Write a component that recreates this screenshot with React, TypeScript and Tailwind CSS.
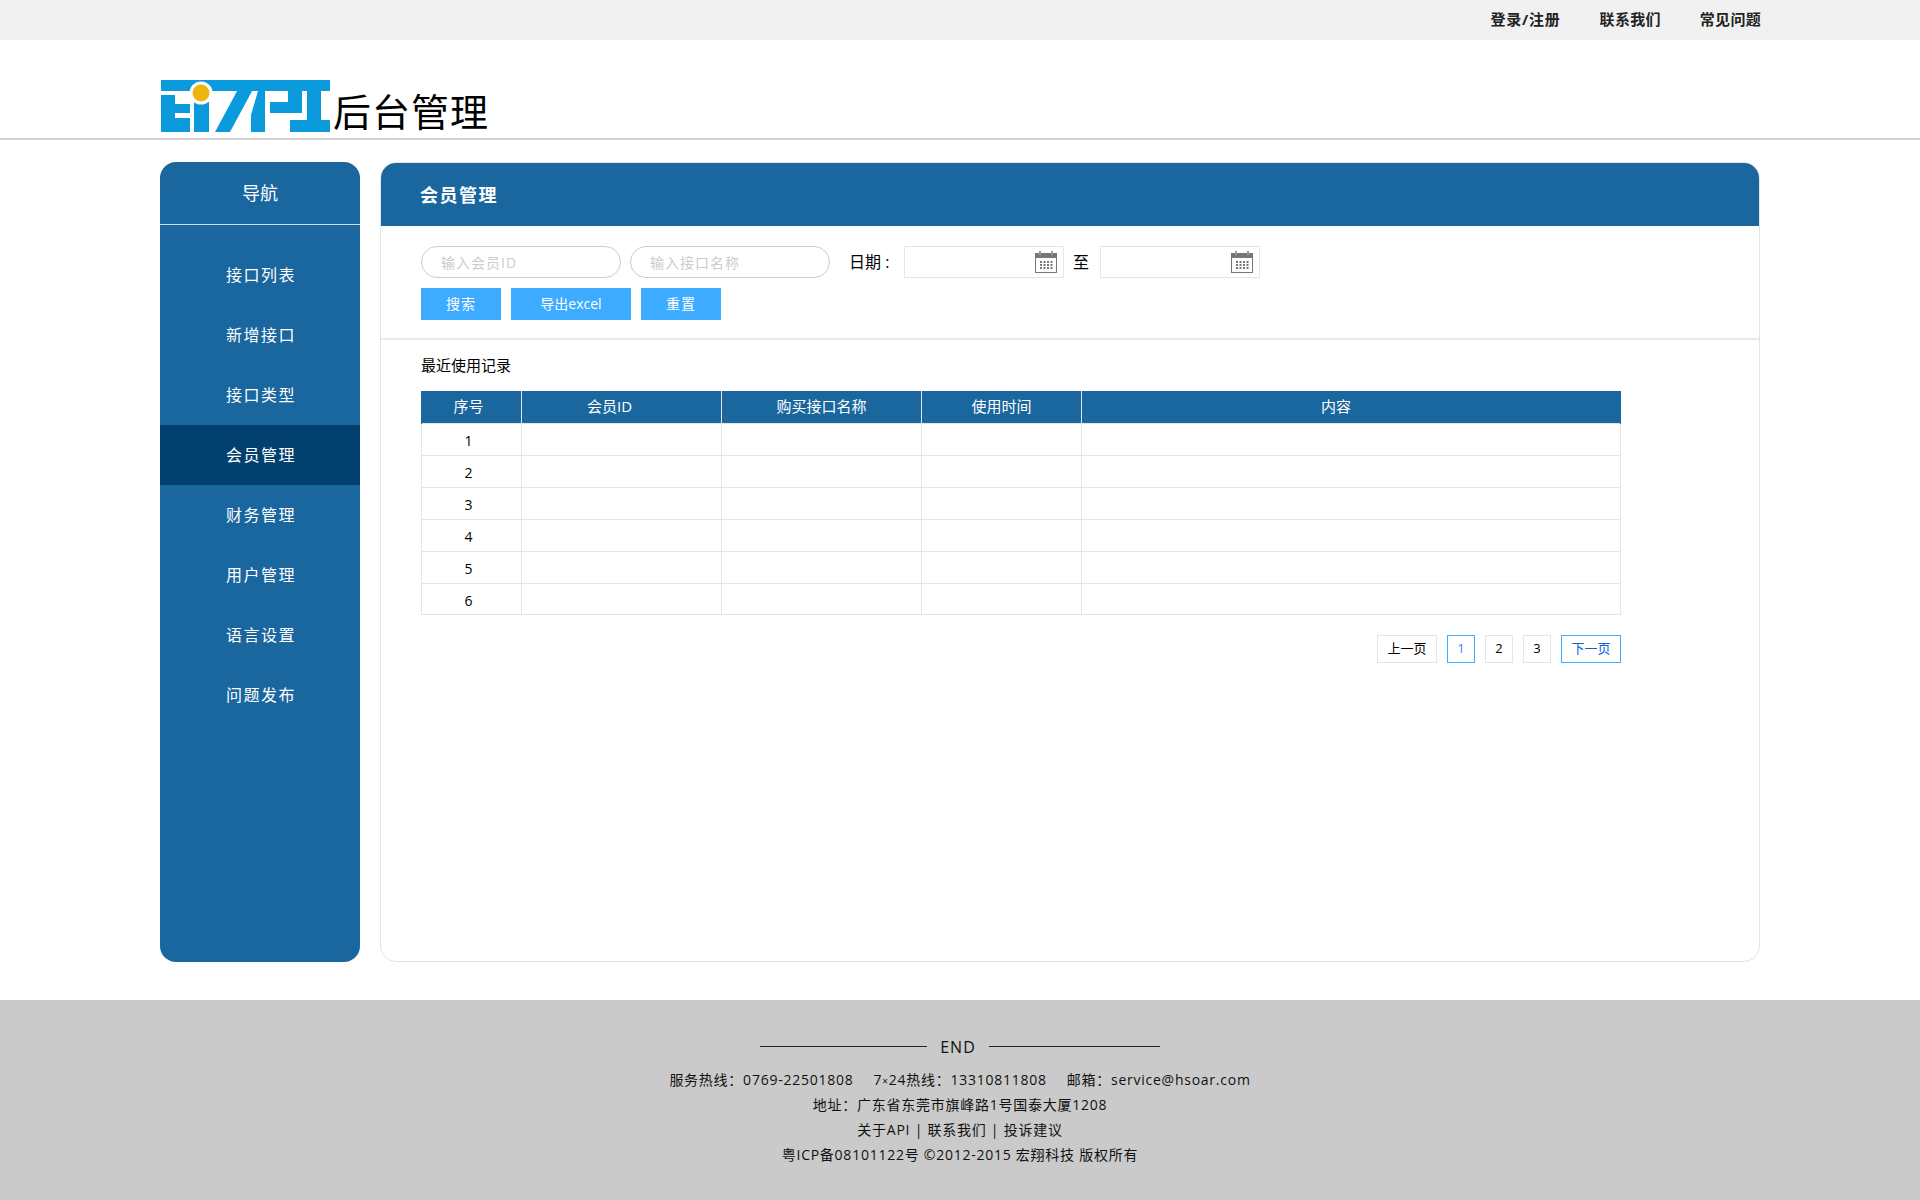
const FONT = "font-['Open_Sans','Noto_Sans_CJK_SC',sans-serif]";

const navItems = ["接口列表", "新增接口", "接口类型", "会员管理", "财务管理", "用户管理", "语言设置", "问题发布"];
const columns = [
  { title: "序号", width: "w-[100px]", offset: "pr-[6px]" },
  { title: "会员ID", width: "w-[200px]", offset: "pr-6" },
  { title: "购买接口名称", width: "w-[200px]", offset: "" },
  { title: "使用时间", width: "w-[160px]", offset: "" },
  { title: "内容", width: "w-[539px]", offset: "pr-[30px]" },
];
const rows = [1, 2, 3, 4, 5, 6];

function Logo() {
  return (
    <svg width="170" height="52" viewBox="0 0 170 52" className="shrink-0">
      <g fill="#0b9bdc">
        <path d="M1 0h169v11H1z" />
        <path d="M1 15h14v9h15v9H15v5h15v14H1z" />
        <path d="M34 22h15v30H34z" />
        <path d="M55 52h15L98 0H83z" />
        <path d="M91 52V35L98 11h7v41z" />
        <path d="M128 11h14v22h-32V22h18z" />
        <path d="M147 11h14v29h9v12h-40V40h17z" />
      </g>
      <circle cx="41" cy="13" r="11.5" fill="#fff" />
      <circle cx="41" cy="13" r="8.5" fill="#efb50f" />
    </svg>
  );
}

function CalendarIcon() {
  return (
    <svg width="24" height="24" viewBox="0 0 24 24" className="shrink-0">
      <rect x="1.5" y="3.5" width="21" height="19" fill="#fff" stroke="#777" />
      <rect x="1" y="3" width="22" height="5" fill="#777" />
      <rect x="5" y="1" width="2" height="4" fill="#999" />
      <rect x="17" y="1" width="2" height="4" fill="#999" />
      <g fill="#777">
        {[6, 9.5, 13, 16.5].map((x) =>
          [11, 14, 17].map((y) => <rect key={`${x}-${y}`} x={x} y={y} width="2" height="2" />),
        )}
      </g>
    </svg>
  );
}

function DateBox() {
  return (
    <div className="flex h-8 w-40 items-center justify-end border border-[#e5e5e5] bg-white pr-[5px]">
      <CalendarIcon />
    </div>
  );
}

export default function App() {
  return (
    <div className={`min-h-[1200px] bg-white text-sm text-black ${FONT}`}>
      <div className="h-10 bg-[#f1f1f1]">
        <div className="mx-auto flex h-10 w-[1600px] items-center justify-end gap-[38px] text-[15px] font-bold tracking-[0.3px] text-[#222]">
          <a className="mr-px tracking-[0.8px]">登录/注册</a>
          <a>联系我们</a>
          <a className="-mr-px ml-px">常见问题</a>
        </div>
      </div>

      <div className="h-[100px] border-b-2 border-[#d2d2d2]">
        <div className="mx-auto flex h-[98px] w-[1600px] items-end pb-[6px]">
          <Logo />
          <span className="mb-[-5px] ml-[3px] text-[38px] leading-[52px] tracking-[1px] text-black">后台管理</span>
        </div>
      </div>

      <div className="mx-auto flex w-[1600px] gap-5 pt-[22px]">
        <aside className="h-[800px] w-[200px] shrink-0 overflow-hidden rounded-2xl bg-[#1a669f] text-white">
          <div className="flex h-[63px] items-center justify-center border-b border-[#cfe0ec] text-lg">导航</div>
          <nav className="pt-5">
            {navItems.map((item) => (
              <a
                key={item}
                className={`flex h-[60px] items-center justify-center pl-[2px] text-base tracking-[1.5px] ${
                  item === "会员管理" ? "bg-[#02406f]" : ""
                }`}
              >
                {item}
              </a>
            ))}
          </nav>
        </aside>

        <main className="h-[800px] w-[1380px] overflow-hidden rounded-2xl border border-[#e5e5e5]">
          <div className="flex h-[63px] items-center bg-[#1a669f] pl-[39px] text-lg font-bold tracking-[1.5px] text-white">
            会员管理
          </div>

          <div className="border-b-2 border-[#e9e9e9] px-10 pt-5 pb-[18px]">
            <div className="flex items-center">
              <input
                placeholder="输入会员ID"
                className="h-8 w-[200px] rounded-2xl border border-[#ccc] px-[19px] text-sm tracking-[1px] outline-none placeholder:text-[#ccc]"
              />
              <input
                placeholder="输入接口名称"
                className="ml-[9px] h-8 w-[200px] rounded-2xl border border-[#ccc] px-[19px] text-sm tracking-[1px] outline-none placeholder:text-[#ccc]"
              />
              <span className="ml-[19px] w-[55px] text-base">日期 :</span>
              <DateBox />
              <span className="ml-[9px] mr-[11px] text-base">至</span>
              <DateBox />
            </div>
            <div className="mt-[10px] flex gap-[10px] text-white">
              <button className="h-8 w-20 bg-[#3dabff] tracking-[1px]">搜索</button>
              <button className="h-8 w-[120px] bg-[#3dabff]">导出excel</button>
              <button className="h-8 w-20 bg-[#3dabff] tracking-[1px]">重置</button>
            </div>
          </div>

          <div className="px-10">
            <p className="mt-[15px] mb-4 text-[15px] leading-5">最近使用记录</p>
            <table className="w-[1199px] table-fixed border-collapse">
              <thead>
                <tr className="h-8 bg-[#1a669f] text-[15px] text-white">
                  {columns.map((col) => (
                    <th key={col.title} className={`${col.width} ${col.offset} border border-y-0 border-[#dfe8ef] font-normal first:border-l-[#1a669f] last:border-r-[#1a669f]`}>
                      {col.title}
                    </th>
                  ))}
                </tr>
              </thead>
              <tbody>
                {rows.map((row) => (
                  <tr key={row} className="h-8 last:h-[31px]">
                    {columns.map((col, i) => (
                      <td key={col.title} className={`${i === 0 ? "pr-[6px] pt-1" : ""} border border-[#e5e5e5] text-center`}>
                        {i === 0 ? row : ""}
                      </td>
                    ))}
                  </tr>
                ))}
              </tbody>
            </table>

            <div className="mt-5 flex w-[1200px] justify-end gap-[10px] text-[13px]">
              <a className="flex h-7 w-[60px] items-center justify-center border border-[#e5e5e5]">上一页</a>
              <a className="flex h-7 w-7 items-center justify-center border border-[#3dabff] text-[#3d8bee]">1</a>
              <a className="flex h-7 w-7 items-center justify-center border border-[#e5e5e5]">2</a>
              <a className="flex h-7 w-7 items-center justify-center border border-[#e5e5e5]">3</a>
              <a className="flex h-7 w-[60px] items-center justify-center border border-[#3dabff] text-[#0a62d8]">下一页</a>
            </div>
          </div>
        </main>
      </div>

      <footer className="mt-[38px] flex h-[200px] flex-col items-center bg-[#cacaca] pt-[34px] text-sm leading-[25px] tracking-[0.75px] text-[#111]">
        <div className="flex h-[25px] items-center gap-[13px] text-base">
          <span className="h-px w-[167px] bg-[#222]" />
          <span className="tracking-[1px]">END</span>
          <span className="h-px w-[171px] bg-[#222]" />
        </div>
        <p className="mt-2">
          服务热线：0769-22501808
          <span className="ml-5">
            7<span className="text-[10px] leading-none">×</span>24热线：13310811808
          </span>
          <span className="ml-5">邮箱：service@hsoar.com</span>
        </p>
        <p>地址：广东省东莞市旗峰路1号国泰大厦1208</p>
        <p>关于API | 联系我们 | 投诉建议</p>
        <p>粤ICP备08101122号 ©2012-2015 宏翔科技 版权所有</p>
      </footer>
    </div>
  );
}
